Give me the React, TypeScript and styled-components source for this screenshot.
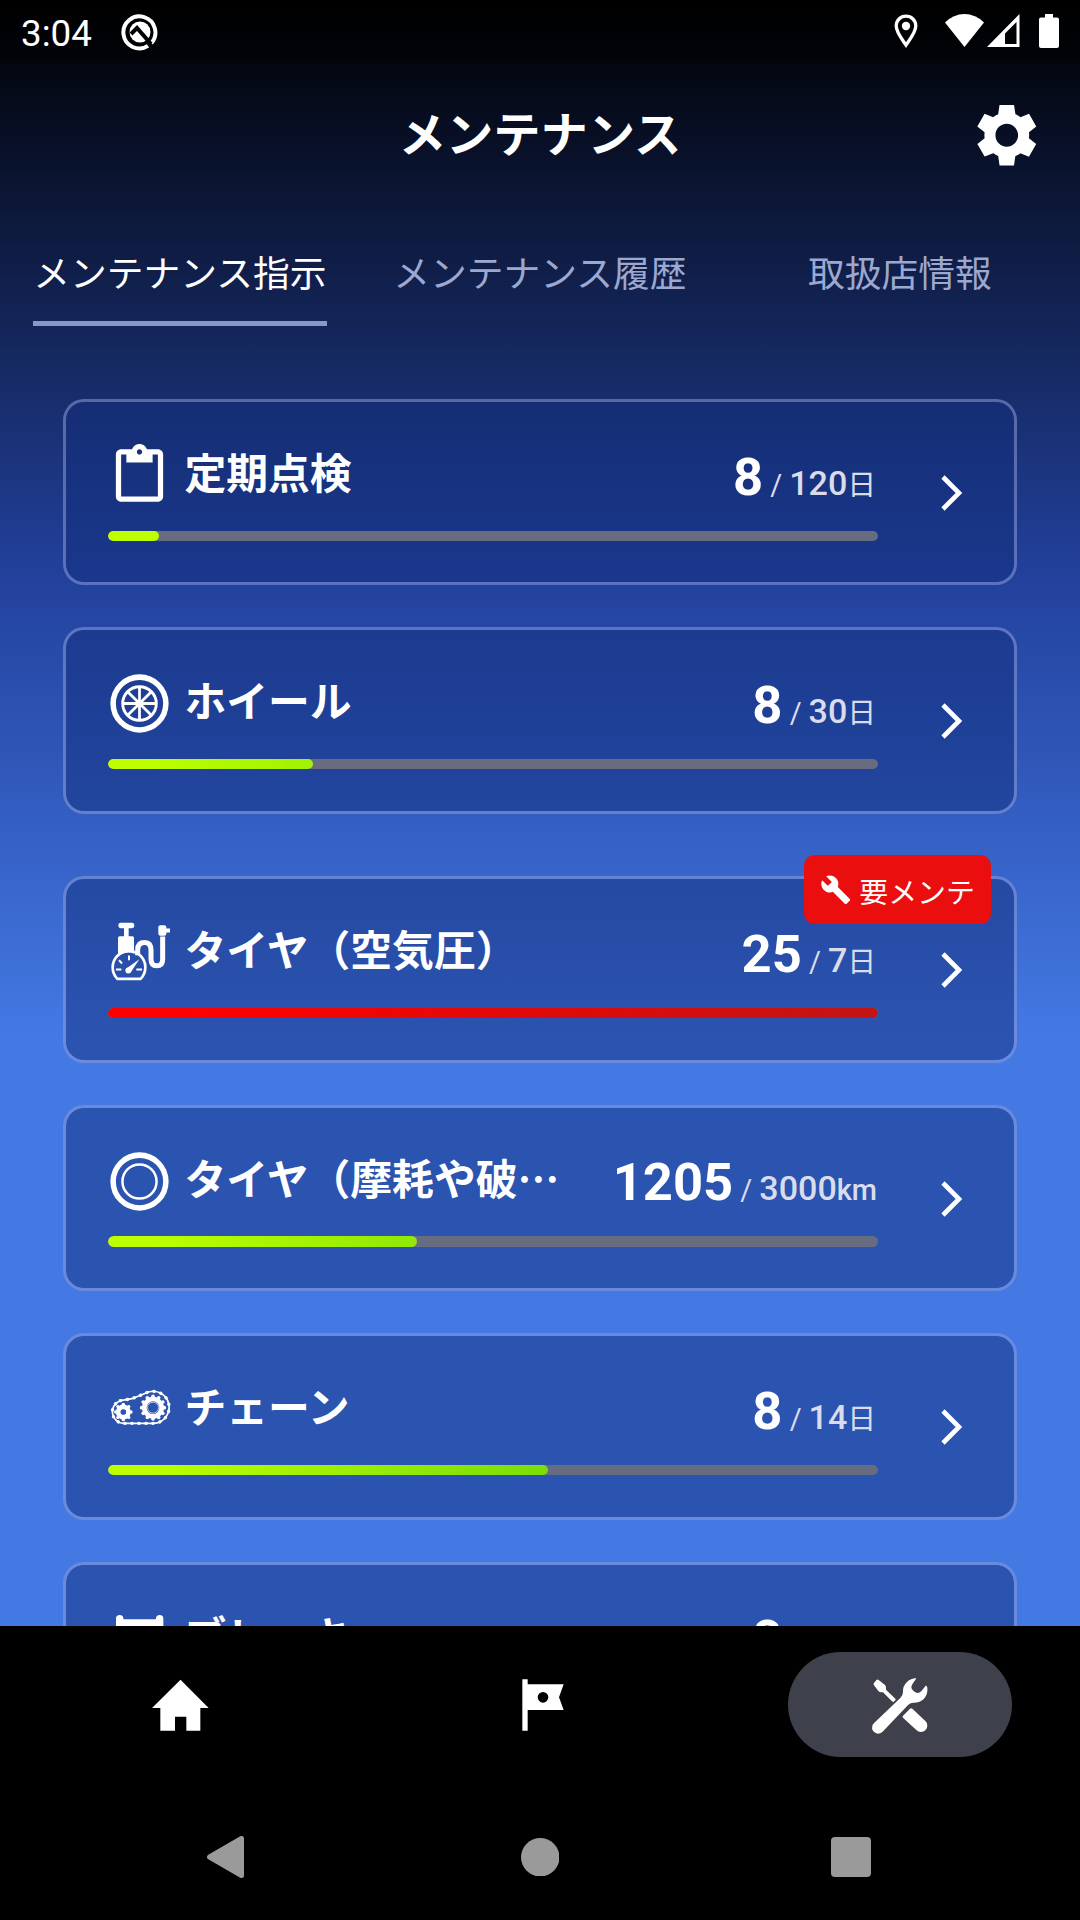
import React from "react";
import styled, { createGlobalStyle } from "styled-components";

const CJK = `"Noto Sans CJK JP", "Noto Sans", sans-serif`;
const LATIN = `Roboto, "Noto Sans CJK JP", sans-serif`;

const GlobalStyle = createGlobalStyle`
  html, body { margin: 0; padding: 0; background: #000; }
  *, *::before, *::after { box-sizing: border-box; }
`;

const Screen = styled.div`
  width: 1080px;
  height: 1920px;
  overflow: hidden;
  display: flex;
  flex-direction: column;
  color: #fff;
  font-family: ${CJK};
  background: linear-gradient(180deg, #000 0, #22419c 576px, #4479e4 1040px);
`;

const StatusBar = styled.div`
  flex: none;
  height: 63px;
  padding: 0 21px;
  display: flex;
  justify-content: space-between;
  background: rgba(0, 0, 0, 0.4);
`;

const StatusGroup = styled.div`
  display: flex;
  align-items: flex-start;
`;

const Clock = styled.span`
  font: 400 36.75px/36px ${LATIN};
  margin-top: 16px;
`;

const StatusIcon = styled.svg<{ $top: number; $left: number }>`
  display: block;
  margin: ${(p) => p.$top}px 0 0 ${(p) => p.$left}px;
`;

const Header = styled.header`
  flex: none;
  height: 144px;
  display: grid;
  grid-template-columns: 1fr auto 1fr;
  align-items: center;
  padding: 0 38px;
`;

const Title = styled.h1`
  grid-column: 2;
  margin: 0 0 6px;
  font: 700 47.25px/60px ${CJK};
`;

const GearButton = styled.button`
  grid-column: 3;
  justify-self: end;
  padding: 0;
  border: 0;
  background: none;
  color: #fff;
  display: flex;
`;

const Tabs = styled.nav`
  flex: none;
  height: 119px;
  display: grid;
  grid-template-columns: repeat(3, 360px);
  justify-items: center;
  align-items: end;
`;

const Tab = styled.a<{ $active?: boolean }>`
  height: 82px;
  border-bottom: 5.25px solid ${(p) => (p.$active ? "#8996c8" : "transparent")};
  color: ${(p) => (p.$active ? "#fff" : "#9ca8d0")};
  font: 400 36.75px/54px ${CJK};
`;

const List = styled.main`
  flex: 1;
  min-height: 0;
  overflow: hidden;
  padding: 73px 63px 0;
  display: flex;
  flex-direction: column;
  gap: 42px;
`;

const Card = styled.section<{ $flagged?: boolean }>`
  position: relative;
  flex: none;
  height: 186.4px;
  margin-top: ${(p) => (p.$flagged ? 20.6 : 0)}px;
  padding: 42px 51px 0 42px;
  display: flex;
  justify-content: space-between;
  border: 3px solid rgba(138, 155, 215, 0.55);
  border-radius: 21px;
  background: rgba(18, 45, 124, 0.5) padding-box;
`;

const CardMain = styled.div`
  width: 770px;
`;

const CardHead = styled.div`
  height: 63px;
  display: flex;
  align-items: flex-start;
`;

const PartIcon = styled.svg`
  flex: none;
  display: block;
  width: 63px;
  height: 63px;
  color: #fff;
`;

const PartName = styled.h2`
  flex: 1;
  margin: 0 0 0 13.4px;
  font: 700 41.8px/55px ${CJK};
  white-space: nowrap;
`;

const Reading = styled.div`
  display: flex;
  align-items: baseline;
  padding: 6.6px 1px 0 0;
  font-family: ${LATIN};
  white-space: pre;
`;

const Current = styled.span`
  font-size: 52.5px;
  line-height: 52.5px;
  font-weight: 700;
`;

const Slash = styled.span`
  margin: 0 7px 0 7.2px;
  color: #d9ddeb;
  font-size: 28.9px;
  line-height: 30px;
  font-weight: 400;
`;

const Limit = styled.span`
  color: #d9ddeb;
  font-size: 34.1px;
  line-height: 36px;
  font-weight: 500;
`;

const Unit = styled.span<{ $latin?: boolean }>`
  margin-right: ${(p) => (p.$latin ? 0 : 0.8)}px;
  color: #d9ddeb;
  font-family: ${(p) => (p.$latin ? LATIN : CJK)};
  font-size: 28.9px;
  line-height: 30px;
  font-weight: ${(p) => (p.$latin ? 500 : 400)};
`;

const Track = styled.div`
  margin-top: 23.5px;
  height: 10.5px;
  border-radius: 6px;
  background: #686c80;
  overflow: hidden;
`;

const Fill = styled.div<{ $over?: boolean }>`
  height: 100%;
  border-radius: 6px;
  background: ${(p) =>
      p.$over
        ? "linear-gradient(90deg, #ff0000, #ff0000 10%, #c21414)"
        : "linear-gradient(90deg, #bdff00, #bdff00 5%, #44c212)"}
    0 0 / 770px 100% no-repeat;
`;

const Chevron = styled.svg`
  flex: none;
  margin-top: 31px;
  display: block;
`;

const Badge = styled.div`
  position: absolute;
  top: -24px;
  right: 23px;
  width: 187px;
  height: 68.5px;
  padding: 0 15.75px;
  display: flex;
  align-items: center;
  gap: 8px;
  border-radius: 10.5px;
  background: #ea0e0e;
`;

const BadgeText = styled.span`
  font: 400 28.9px/36px ${CJK};
  white-space: nowrap;
`;

const BottomNav = styled.nav`
  flex: none;
  height: 157px;
  padding: 26px 68.5px 0 69px;
  display: flex;
  justify-content: space-between;
  background: #000;
`;

const NavItem = styled.a<{ $active?: boolean }>`
  width: 223.5px;
  height: 105px;
  border-radius: 53px;
  display: flex;
  align-items: center;
  justify-content: center;
  background: ${(p) => (p.$active ? "#3e414b" : "transparent")};
`;

const SystemNav = styled.div`
  flex: none;
  height: 137px;
  padding: 11px 209px 0 206px;
  display: flex;
  justify-content: space-between;
  align-items: center;
  background: #000;
`;

const teeth = (cx: number, cy: number, r: number, n: number, size: number) =>
  Array.from({ length: n }, (_, i) => {
    const a = (i / n) * Math.PI * 2;
    return <circle key={i} cx={cx + r * Math.cos(a)} cy={cy + r * Math.sin(a)} r={size} fill="currentColor" stroke="none" />;
  });

const ClipboardIcon = () => (
  <PartIcon viewBox="0 0 24 24" fill="currentColor">
    <path d="M19 2h-4.18C14.4.84 13.3 0 12 0c-1.3 0-2.4.84-2.82 2H5c-1.1 0-2 .9-2 2v16c0 1.1.9 2 2 2h14c1.1 0 2-.9 2-2V4c0-1.1-.9-2-2-2zm-7 0c.55 0 1 .45 1 1s-.45 1-1 1-1-.45-1-1 .45-1 1-1zm7 18H5V4h2v3h10V4h2v16z" />
  </PartIcon>
);

const WheelIcon = () => (
  <PartIcon viewBox="0 0 24 24" fill="none" stroke="currentColor">
    <circle cx="12" cy="12" r="10.05" strokeWidth="2.1" />
    <circle cx="12" cy="12" r="6.4" strokeWidth="1.1" />
    <path d="M12 5.6v12.8M5.6 12h12.8M7.5 7.5l9 9M16.5 7.5l-9 9" strokeWidth="1.05" />
  </PartIcon>
);

const TireIcon = () => (
  <PartIcon viewBox="0 0 24 24" fill="none" stroke="currentColor">
    <circle cx="12" cy="12" r="10.05" strokeWidth="2.1" />
    <circle cx="12" cy="12" r="6.5" strokeWidth="0.95" />
  </PartIcon>
);

const PumpIcon = () => (
  <PartIcon viewBox="174 185.5 189 189" fill="none" stroke="currentColor">
    <g fill="currentColor" stroke="none">
      <rect x="205" y="191" width="48" height="16" rx="7" />
      <rect x="222" y="204" width="14" height="30" />
      <path d="M204 236q0-5 5-5h38q5 0 5 5v48q-15-7-24-3-13 1-24 10z" />
      <rect x="325" y="198" width="24" height="32" rx="6" />
      <rect x="346" y="208" width="14" height="12" />
      <circle cx="235" cy="334" r="9" />
      <path d="M229 328l39-28-26 40z" />
    </g>
    <path d="M202 359a49 49 0 1 1 70 0z" strokeWidth="8" strokeLinejoin="round" />
    <path d="M198 331h16M259 331h17M237 289v14M207 303l9 10" strokeWidth="6" />
    <path d="M263 288v-16q0-22 21-22 19 0 19 23v26q0 21 17 21 18 0 18-20v-68" strokeWidth="15" />
  </PartIcon>
);

const ChainIcon = () => (
  <PartIcon viewBox="174 146 189 189" fill="none" stroke="currentColor">
    <path d="M211 214l35-6 42-17a48 48 0 1 1 23 91h-92a35 35 0 0 1-8-68z" strokeWidth="5" />
    <path
      d="M211 214l35-6 42-17a48 48 0 1 1 23 91h-92a35 35 0 0 1-8-68z"
      strokeWidth="10"
      strokeLinecap="round"
      strokeDasharray="1 20"
    />
    <circle cx="220" cy="248" r="15.5" strokeWidth="14" />
    {teeth(220, 248, 23, 8, 5)}
    <circle cx="309" cy="235" r="26" strokeWidth="14" />
    <circle cx="309" cy="235" r="16.500" strokeWidth="2" />
    {teeth(309, 235, 34, 12, 5.5)}
  </PartIcon>
);

const BrakeIcon = () => (
  <PartIcon viewBox="174 831 189 189" fill="currentColor">
    <path d="M198 866a11 11 0 0 1 22 0l2 2h94l2-2a11 11 0 0 1 22 0v96h-142z" />
  </PartIcon>
);

type Item = {
  name: string;
  icon: React.ReactNode;
  current: number;
  limit: number;
  unit: string;
  alert?: string;
};

const items: Item[] = [
  { name: "定期点検", icon: <ClipboardIcon />, current: 8, limit: 120, unit: "日" },
  { name: "ホイール", icon: <WheelIcon />, current: 8, limit: 30, unit: "日" },
  { name: "タイヤ（空気圧）", icon: <PumpIcon />, current: 25, limit: 7, unit: "日", alert: "要メンテ" },
  { name: "タイヤ（摩耗や破…", icon: <TireIcon />, current: 1205, limit: 3000, unit: "km" },
  { name: "チェーン", icon: <ChainIcon />, current: 8, limit: 14, unit: "日" },
  { name: "ブレーキ", icon: <BrakeIcon />, current: 8, limit: 30, unit: "日" },
];

const MaintenanceCard = ({ item }: { item: Item }) => {
  const ratio = Math.min(1, item.current / item.limit);
  return (
    <Card $flagged={!!item.alert}>
      <CardMain>
        <CardHead>
          {item.icon}
          <PartName>{item.name}</PartName>
          <Reading>
            <Current>{item.current}</Current>
            <Slash>/</Slash>
            <Limit>{item.limit}</Limit>
            <Unit $latin={item.unit === "km"}>{item.unit}</Unit>
          </Reading>
        </CardHead>
        <Track>
          <Fill $over={!!item.alert} style={{ width: `${ratio * 100}%` }} />
        </Track>
      </CardMain>
      <Chevron width="22" height="36" viewBox="0 0 22 36" fill="none" stroke="#fff" strokeWidth="4.6">
        <path d="M2 2l16 16L2 34" />
      </Chevron>
      {item.alert && (
        <Badge>
          <svg width="31.5" height="31.5" viewBox="0 0 24 24" fill="#fff">
            <path d="M22.7 19l-9.1-9.1c.9-2.3.4-5-1.5-6.9-2-2-5-2.4-7.4-1.3L9 6 6 9 1.6 4.7C.4 7.1.9 10.1 2.9 12.1c1.9 1.9 4.6 2.4 6.9 1.5l9.1 9.1c.4.4 1 .4 1.4 0l2.3-2.3c.5-.4.5-1.1.1-1.4z" />
          </svg>
          <BadgeText>{item.alert}</BadgeText>
        </Badge>
      )}
    </Card>
  );
};

export default function App() {
  return (
    <Screen lang="ja">
      <GlobalStyle />
      <StatusBar>
        <StatusGroup>
          <Clock>3:04</Clock>
          <StatusIcon $top={12.5} $left={29.5} width="38" height="38" viewBox="0 0 38 38" fill="none">
            <path d="M30.2 30.2A16 16 0 1 0 27 32.9" stroke="#fff" strokeWidth="4" />
            <circle cx="19" cy="19" r="10.5" fill="#fff" />
            <path d="M10 21l6-6 14 16" stroke="#000207" strokeWidth="4" />
          </StatusIcon>
        </StatusGroup>
        <StatusGroup>
          <StatusIcon $top={14} $left={0} width="24" height="34" viewBox="0 0 24 34" fill="none">
            <path d="M12 2.200c-5.500 0-9.800 4.200-9.800 9.600C2.200 18.500 8 25 12 31c4-6 9.800-12.500 9.800-19.200 0-5.400-4.300-9.600-9.800-9.600z" stroke="#fff" strokeWidth="3.3" />
            <circle cx="12" cy="12" r="4.2" fill="#fff" />
          </StatusIcon>
          <StatusIcon $top={14} $left={27} width="39" height="33" viewBox="0 0 39 33" fill="#fff">
            <path d="M0 8.500Q8.500 0 19.500 0T39 8.500L19.500 33z" />
          </StatusIcon>
          <StatusIcon $top={14} $left={3.5} width="33" height="33" viewBox="0 0 33 33">
            <path fillRule="evenodd" fill="#fff" d="M0 33L32.500 0v33zM18 30h11.500V8L18 19.500z" />
          </StatusIcon>
          <StatusIcon $top={14} $left={19} width="20" height="34" viewBox="0 0 20 34" fill="#fff">
            <path d="M6 0h8v3.500h4q2 0 2 2V32q0 2-2 2H2q-2 0-2-2V5.500q0-2 2-2h4z" />
          </StatusIcon>
        </StatusGroup>
      </StatusBar>
      <Header>
        <Title>メンテナンス</Title>
        <GearButton aria-label="設定">
          <svg width="71.5" height="72.5" viewBox="0 0 24 24" fill="currentColor" preserveAspectRatio="none">
            <path d="M19.44 12.99l.01-.02c.04-.32.08-.64.08-.98 0-.34-.03-.66-.07-.99l.01.02 2.44-1.92-2.43-4.22-2.87 1.16.01.01c-.52-.4-1.09-.74-1.71-1h.01L14.44 2H9.57l-.44 3.07h.01c-.62.26-1.19.6-1.71 1l.01-.01-2.88-1.17-2.44 4.22 2.44 1.92.01-.02c-.04.33-.07.65-.07.99 0 .34.03.66.08.98l-.01-.02-2.1 1.65-.33.26 2.43 4.2 2.88-1.15-.02-.04c.53.41 1.1.75 1.73 1.01h-.03L9.58 22h4.85s.03-.18.06-.42l.38-2.65h-.01c.62-.26 1.2-.6 1.73-1.01l-.02.04 2.88 1.15 2.43-4.2s-.14-.12-.33-.26l-2.11-1.66zM12 15.8c-2.1 0-3.8-1.7-3.8-3.8s1.700-3.800 3.800-3.800 3.800 1.700 3.800 3.800-1.700 3.800-3.800 3.800z" />
          </svg>
        </GearButton>
      </Header>
      <Tabs>
        <Tab $active>メンテナンス指示</Tab>
        <Tab>メンテナンス履歴</Tab>
        <Tab>取扱店情報</Tab>
      </Tabs>
      <List>
        {items.map((item) => (
          <MaintenanceCard key={item.name} item={item} />
        ))}
      </List>
      <BottomNav>
        <NavItem>
          <svg width="57" height="52" viewBox="157 116 171 156" fill="#fff">
            <path d="M242.500 118L327 203h-25v68h-42v-42h-34v42h-44v-68h-25z" />
          </svg>
        </NavItem>
        <NavItem>
          <svg width="48" height="52" viewBox="1249 116 144 156" fill="#fff">
            <path
              fillRule="evenodd"
              d="M1268 117h16v15h108l-14 39 14 38h-108v62h-16zM1346 171a16 16 0 1 0-32 0a16 16 0 1 0 32 0z"
            />
          </svg>
        </NavItem>
        <NavItem $active>
          <svg width="58" height="58" viewBox="812 229 174 174" fill="#fff">
            <path d="M829 240q3-1 6 1l19 15q3 3 3 9v5l28 27q2 2 0 5l-5 4q-2 2-5-1l-27-27h-7q-5-1-7-4l-13-17q-3-4 0-7z" />
            <path d="M948 236q-3 6-9 13-6 7-6 14 0 5 6 10t12 7q7 0 13-7l12-15q4-1 5 6 2 19-10 33-12 12-30 12-9-1-17 6l-78 82q-6 5-14 5-8-1-13-7-6-8-3-17 1-4 6-9l78-74q8-8 8-18-1-18 12-30 13-12 28-11z" />
            <path d="M929 327q4-3 8 1l38 36q7 6 6 14 0 8-6 14-6 5-13 5-8 0-14-6l-40-37q-3-3 0-6z" />
          </svg>
        </NavItem>
      </BottomNav>
      <SystemNav>
        <svg width="43" height="42" viewBox="0 0 43 42" fill="#9a9a9a" stroke="#9a9a9a" strokeWidth="5" strokeLinejoin="round">
          <path d="M35.500 2.500v37L3.500 21z" />
        </svg>
        <svg width="38.5" height="38.5" viewBox="0 0 38.5 38.5" fill="#9a9a9a">
          <circle cx="19.25" cy="19.25" r="19.25" />
        </svg>
        <svg width="40" height="40" viewBox="0 0 40 40" fill="#9a9a9a">
          <rect width="40" height="40" rx="4" />
        </svg>
      </SystemNav>
    </Screen>
  );
}
